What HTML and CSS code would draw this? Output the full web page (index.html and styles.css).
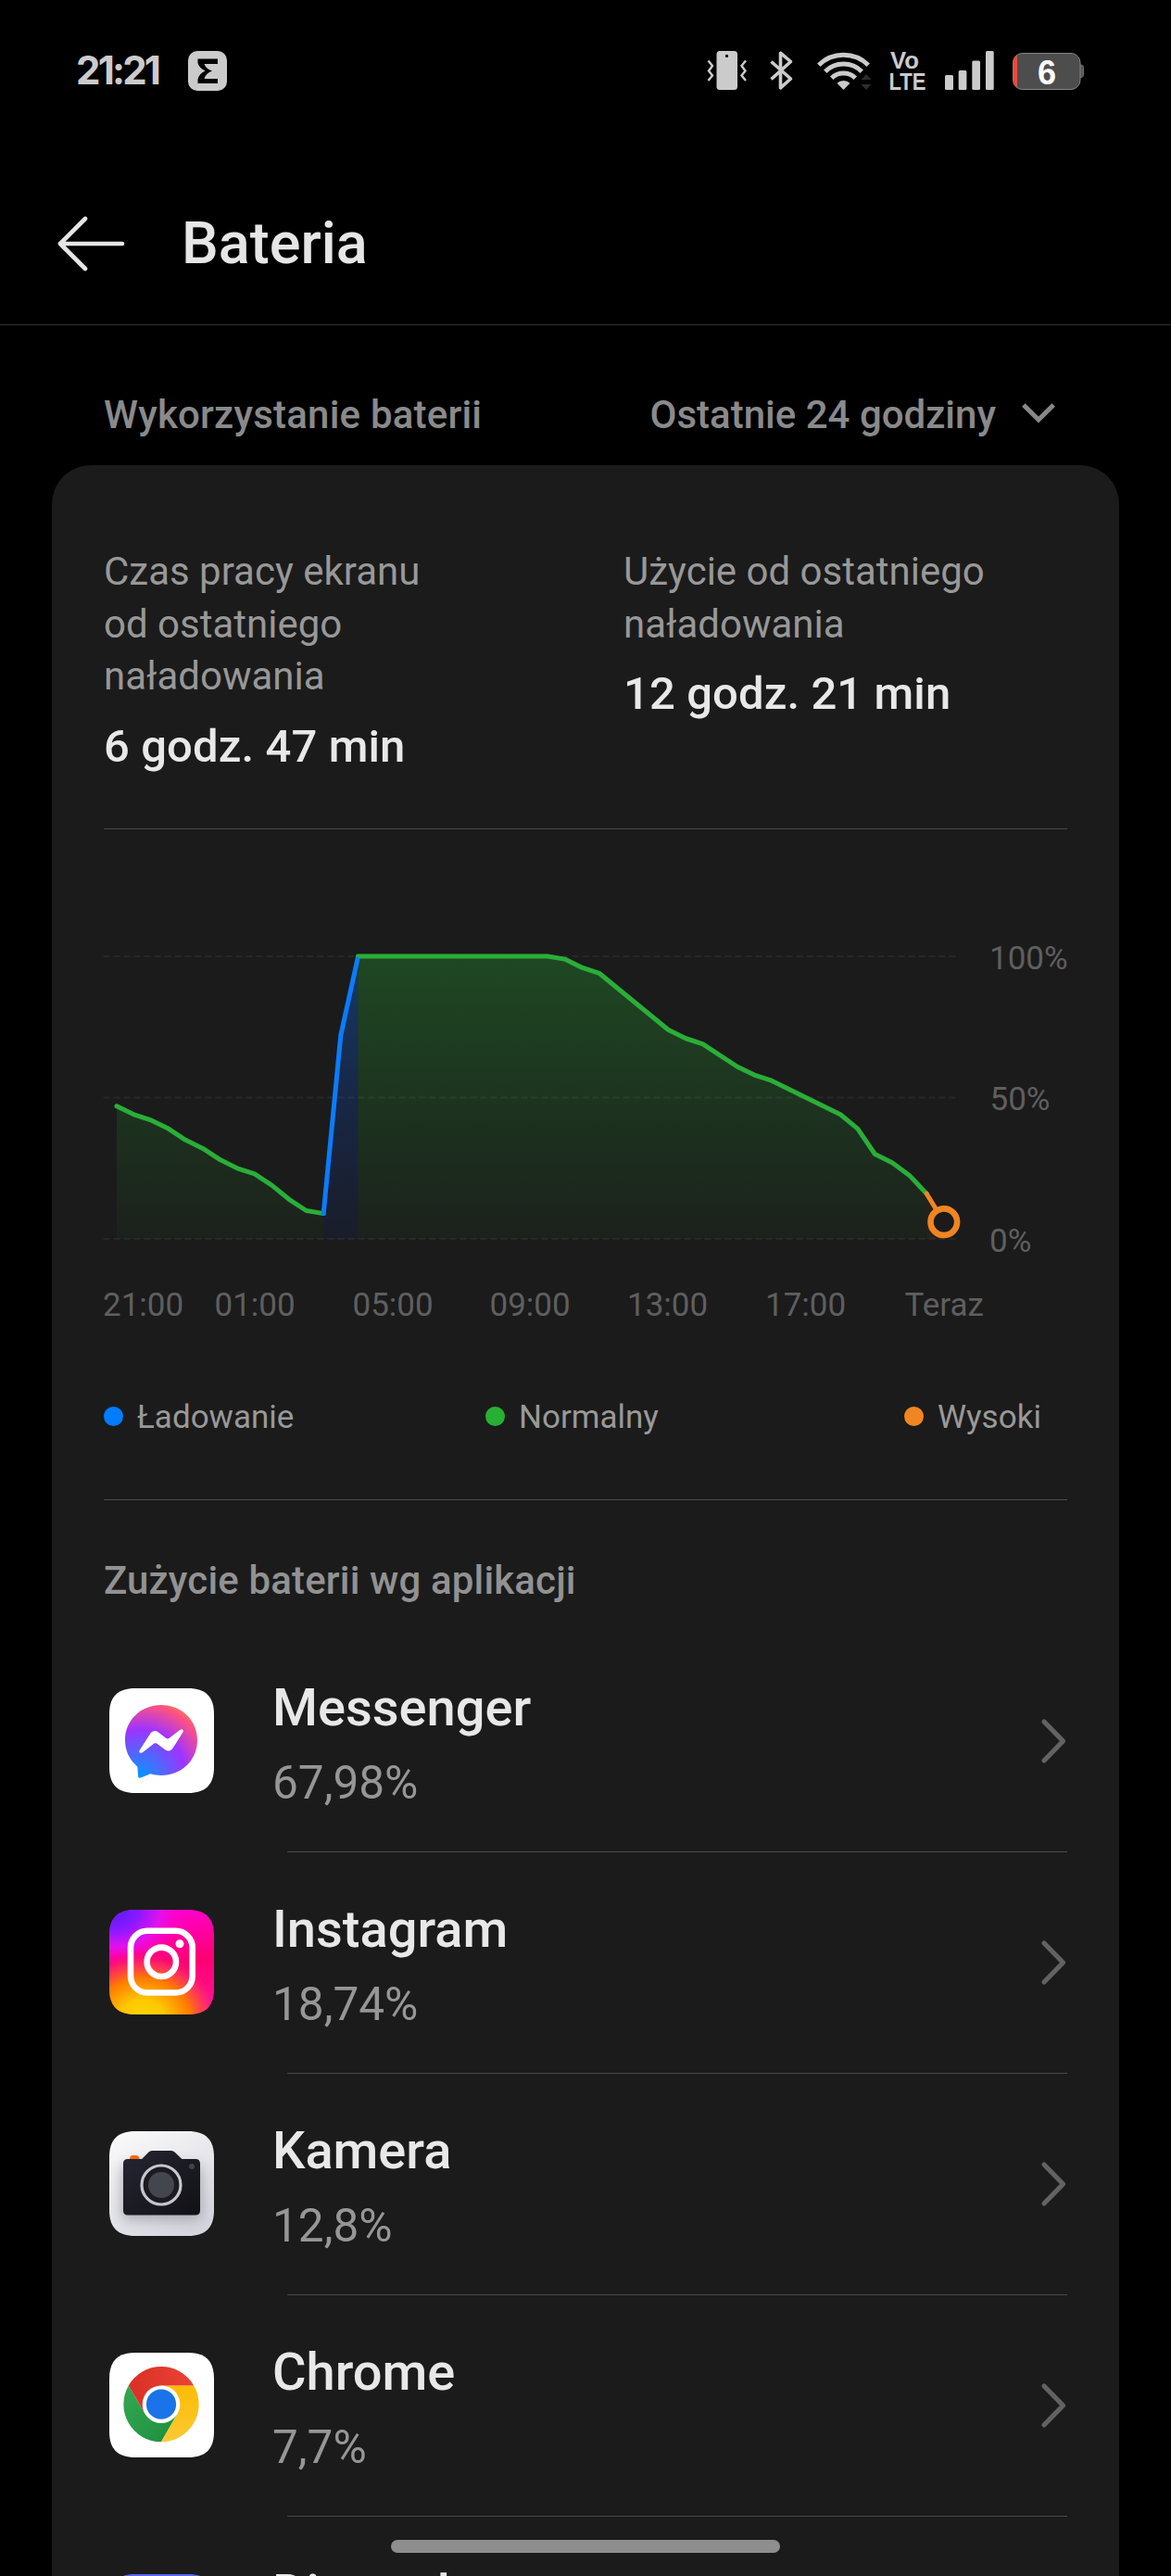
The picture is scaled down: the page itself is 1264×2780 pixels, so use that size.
FILE: index.html
```html
<!DOCTYPE html>
<html lang="pl">
<head>
<meta charset="utf-8">
<title>Bateria</title>
<link rel="stylesheet" href="styles.css">
</head>
<body>
<div class="screen">
  <header class="status">
    <span class="clock">21:21</span>
    <svg class="status-app" width="42" height="43" viewBox="0 0 42 43"><rect width="42" height="43" rx="10" fill="#cbcbcb"/><path d="M10.500 8.500H32V14H17.500C18.500 17.500 21.500 20 26 21.500C21.500 23.500 18.500 26 17.500 30H32V35H10.500V30.500C11.500 26.500 14 23.500 18.500 21.500C14 19.500 11.500 16.500 10.500 13Z" fill="#000"/></svg>
    <div class="status-icons">
      <svg class="i-vibrate" width="44" height="42" viewBox="0 0 44 42" fill="none" stroke="#cbcbcb" stroke-width="2.400"><rect x="10.500" width="22.500" height="42" rx="3.500" fill="#cbcbcb" stroke="none"/><circle cx="21.500" cy="5.400" r="1.600" fill="#000" stroke="none"/><path d="M1.500 10.500L6 16 2 21.500 6 26.500 1.500 32M42 10.500L37.500 16 41.500 21.500 37.500 26.500 42 32"/></svg>
      <svg class="i-bt" width="25" height="42" viewBox="0 0 25 42" fill="none" stroke="#cbcbcb" stroke-width="3.600" stroke-linejoin="round"><path d="M1.500 11.500L22.500 30 11.500 39.800V2.200L22.500 11.500 1.500 30.500"/></svg>
      <svg class="i-wifi" width="60" height="42" viewBox="0 0 60 42" fill="none" stroke="#cbcbcb" stroke-width="5"><path d="M1.800 15.200A38 38 0 0 1 55.200 15.200M8.800 22.200A28 28 0 0 1 48.200 22.200M15.700 29.200A18.500 18.500 0 0 1 41.300 29.200"/><path d="M28.500 42L21.500 34.800A10 10 0 0 1 35.500 34.800Z" fill="#cbcbcb" stroke="none"/><path d="M53 25L58.500 31H47.500ZM53 42L58.500 36H47.500Z" fill="#2c2c2c" stroke="none"/></svg>
      <svg class="i-volte" width="38" height="43" viewBox="0 0 38 43" fill="#cbcbcb"><text class="volte" x="0" y="19" textLength="31" lengthAdjust="spacingAndGlyphs">Vo</text><text class="volte" x="-1.500" y="42" textLength="40" lengthAdjust="spacingAndGlyphs">LTE</text></svg>
      <svg class="i-signal" width="53" height="42" viewBox="0 0 53 42" fill="#cbcbcb"><rect y="26" width="9" height="16" rx="1.500"/><rect x="14.700" y="21" width="8.700" height="21" rx="1.500"/><rect x="29.300" y="10.500" width="8.700" height="31.500" rx="1.500"/><rect x="44" width="8.700" height="42" rx="1.500"/></svg>
      <svg class="i-battery" width="78" height="42" viewBox="0 0 78 42"><defs><clipPath id="cell"><rect x=".5" y="2.500" width="72.500" height="39" rx="10"/></clipPath></defs><path d="M72 15C77 15 76.500 16.500 76.500 22 76.500 27.500 77 28.500 72 28.500Z" fill="#555" stroke="#777"/><rect x=".5" y="2.500" width="72.500" height="39" rx="10" fill="#4d4d4d" stroke="#868686"/><rect y="2" width="5" height="40" fill="#ec4a3c" clip-path="url(#cell)"/><text class="level" x="37" y="35.500" text-anchor="middle">6</text></svg>
    </div>
  </header>

  <div class="topbar">
    <svg width="73" height="60" viewBox="0 0 73 60" fill="none" stroke="#e6e6e6" stroke-width="4.600" stroke-linecap="round" stroke-linejoin="round"><path d="M30 3L3 30 30 57M3 30H70"/></svg>
    <h1>Bateria</h1>
  </div>

  <div class="filter">
    <span class="caption">Wykorzystanie baterii</span>
    <div class="range"><span>Ostatnie 24 godziny</span>
      <svg width="36" height="22" viewBox="0 0 36 22" fill="none" stroke="#888" stroke-width="5"><path d="M1.800 2L18 18 34.200 2"/></svg>
    </div>
  </div>

  <main class="card">
    <section class="stats">
      <div><p>Czas pracy ekranu<br>od ostatniego<br>naładowania</p><strong>6 godz. 47 min</strong></div>
      <div><p>Użycie od ostatniego<br>naładowania</p><strong>12 godz. 21 min</strong></div>
    </section>

    <section class="usage">
      <svg class="chart" width="1042" height="545" viewBox="0 0 1042 545">
        <defs>
          <linearGradient id="green" gradientUnits="userSpaceOnUse" x1="0" y1="137" x2="0" y2="442"><stop stop-color="#27b034" stop-opacity=".3"/><stop offset="1" stop-color="#27b034" stop-opacity=".04"/></linearGradient>
          <linearGradient id="blue" gradientUnits="userSpaceOnUse" x1="0" y1="137" x2="0" y2="442"><stop stop-color="#0a7cff" stop-opacity=".32"/><stop offset="1" stop-color="#0a40ff" stop-opacity=".06"/></linearGradient>
        </defs>
        <path d="M14 442V298.700L32.600 307.800 51.200 313.900 69.800 323.100 88.400 335.300 107 344.400 125.600 356.600 144.200 365.800 162.800 371.900 181.400 384.100 200 399.300 218.600 411.500 237.200 414.600V442Z" fill="url(#green)"/>
        <path d="M237.200 442V414.600L255.800 222.400 274.400 137V442Z" fill="url(#blue)"/>
        <path d="M274.400 442V137H479L497.600 140.100 516.200 149.200 534.800 155.300 609.200 216.300 627.800 225.500 646.400 231.600 683.600 256 702.200 265.100 720.800 271.200 795.200 307.800 813.800 323.100 832.400 350.500 851 359.700 869.600 373.400 888.200 393.200V442Z" fill="url(#green)"/>
        <path d="M888.200 442V393.200L906.800 423.700V442Z" fill="#f08522" fill-opacity=".06"/>
        <path d="M-.5 137H921M-.5 289.500H921M-.5 442H921" stroke="#fff" stroke-opacity=".055" stroke-width="2" stroke-dasharray="7 4"/>
        <g fill="none" stroke-width="5" stroke-linejoin="round">
          <path d="M14 298.700L32.600 307.800 51.200 313.900 69.800 323.100 88.400 335.300 107 344.400 125.600 356.600 144.200 365.800 162.800 371.900 181.400 384.100 200 399.300 218.600 411.500 237.200 414.600" stroke="#2aae38" stroke-linecap="round"/>
          <path d="M274.400 137H479L497.600 140.100 516.200 149.200 534.800 155.300 609.200 216.300 627.800 225.500 646.400 231.600 683.600 256 702.200 265.100 720.800 271.200 795.200 307.800 813.800 323.100 832.400 350.500 851 359.700 869.600 373.400 888.200 393.200" stroke="#2aae38" stroke-linecap="round"/>
          <path d="M237.200 416.500V414.600L255.800 222.400 274.400 138" stroke="#0a7cff"/>
          <path d="M888.200 393.200L906.800 423.700" stroke="#f08522" stroke-linecap="round"/>
        </g>
        <circle cx="906.800" cy="423.700" r="14.300" fill="#1b1b1b" stroke="#f08522" stroke-width="6.600"/>
        <g class="axis">
          <text x="956" y="151">100%</text><text x="956.500" y="303">50%</text><text x="956" y="456">0%</text>
          <text x="-1" y="525">21:00</text><text x="119.500" y="525">01:00</text><text x="268.500" y="525">05:00</text><text x="416.500" y="525">09:00</text><text x="565" y="525">13:00</text><text x="714" y="525">17:00</text><text x="864.500" y="525">Teraz</text>
        </g>
      </svg>
      <div class="legend">
        <span><i class="dot charging"></i>Ładowanie</span>
        <span><i class="dot normal"></i>Normalny</span>
        <span><i class="dot high"></i>Wysoki</span>
      </div>
    </section>

    <h2>Zużycie baterii wg aplikacji</h2>
    <ul class="apps">
      <li>
        <svg class="app-icon" width="113" height="113" viewBox="0 0 113 113"><defs>
          <path id="tile" d="M28 0H85C104 0 113 9 113 28V85C113 104 104 113 85 113H28C9 113 0 104 0 85V28C0 9 9 0 28 0Z"/><clipPath id="clip"><use href="#tile"/></clipPath>
          <radialGradient id="msg" cx=".19" cy=".995" r="1.090"><stop stop-color="#0099ff"/><stop offset=".61" stop-color="#a033ff"/><stop offset=".935" stop-color="#ff5280"/><stop offset="1" stop-color="#ff7061"/></radialGradient></defs>
          <use href="#tile" fill="#fff"/>
          <path d="M56 18C78 18 95 34.500 95 56S78 94 56 94C52 94 48 93.300 44.500 92.300L34 96.500C32 97 31 96.300 31 94.500L30.500 86C30.500 85 30 84.200 29 83.300C21.500 76.500 17 67 17 56C17 34.500 34 18 56 18Z" fill="url(#msg)"/>
          <path d="M32.600 67L44.500 48.500C46.300 45.700 49.800 45.200 52.300 47L61.500 54C62.500 54.600 63.500 54.600 64.300 54L76.500 44.800C78.500 43.400 80.500 45 79.500 47.200L68.500 64.800C66.600 67.800 63 68.400 60.500 66.600L51.200 59.600C50.300 59 49.200 59 48.400 59.600L35.800 69.200C33.500 70.800 31.300 69 32.600 67Z" fill="#fff"/>
        </svg>
        <div class="app"><b>Messenger</b><span>67,98%</span></div>
        <svg class="go" width="27" height="50" viewBox="0 0 27 50"><path d="M3 4L23.500 25 3 46"/></svg>
      </li>
      <li>
        <svg class="app-icon" width="113" height="113" viewBox="0 0 113 113"><defs>
          <linearGradient id="ig" x1=".6" y1="0" x2=".75" y2="1"><stop stop-color="#ff00d0"/><stop offset=".5" stop-color="#ff0072"/><stop offset=".75" stop-color="#ff0a88"/><stop offset="1" stop-color="#ff18b8"/></linearGradient>
          <radialGradient id="igp" gradientUnits="userSpaceOnUse" cx="0" cy="0" r="68" gradientTransform="translate(4 2) scale(1.150 .85)"><stop stop-color="#5a1cff"/><stop offset=".35" stop-color="#8a18ff"/><stop offset=".65" stop-color="#e012ee"/><stop offset="1" stop-color="#ff00c8" stop-opacity="0"/></radialGradient>
          <radialGradient id="igy" gradientUnits="userSpaceOnUse" cx="0" cy="0" r="78" gradientTransform="translate(36 118) scale(1.100 .95)"><stop stop-color="#ffd800"/><stop offset=".28" stop-color="#ffc800"/><stop offset=".6" stop-color="#ff7a00"/><stop offset=".82" stop-color="#ff3060" stop-opacity=".8"/><stop offset="1" stop-color="#ff0070" stop-opacity="0"/></radialGradient></defs>
          <g clip-path="url(#clip)"><path d="M0 0H113V113H0Z" fill="url(#ig)"/><path d="M0 0H113V113H0Z" fill="url(#igp)"/><path d="M0 0H113V113H0Z" fill="url(#igy)"/></g>
          <g fill="none" stroke="#fff" stroke-width="6.600"><rect x="23" y="22.800" width="66.700" height="66.700" rx="18"/><circle cx="56.300" cy="56.300" r="15.700"/></g><circle cx="76" cy="36.700" r="4.500" fill="#fff"/>
        </svg>
        <div class="app"><b>Instagram</b><span>18,74%</span></div>
        <svg class="go" width="27" height="50" viewBox="0 0 27 50"><path d="M3 4L23.500 25 3 46"/></svg>
      </li>
      <li>
        <svg class="app-icon" width="113" height="113" viewBox="0 0 113 113"><defs>
          <linearGradient id="cam" x1=".1" y1="0" x2=".7" y2="1"><stop stop-color="#fafafa"/><stop offset="1" stop-color="#d6d6df"/></linearGradient>
          <linearGradient id="body" x1="0" y1="0" x2="1" y2="1"><stop stop-color="#262533"/><stop offset="1" stop-color="#111114"/></linearGradient>
          <filter id="soft" x="-30%" y="-30%" width="160%" height="160%"><feGaussianBlur stdDeviation="7"/></filter></defs>
          <use href="#tile" fill="url(#cam)"/>
          <g clip-path="url(#clip)"><rect x="13" y="36" width="87" height="60" rx="8" fill="#777784" opacity=".5" filter="url(#soft)"/></g>
          <path d="M22 32V29.500C22 27 23.500 26 26 26H28.500C31 26 32.500 27.500 32.500 30V32Z" fill="#f8670c"/>
          <path d="M20 30H35L42.500 22.500Q44 21 46 21H67Q69 21 70.500 22.500L78.300 30H93Q98 30 98 35V85.500Q98 90.500 93 90.500H20Q15 90.500 15 85.500V35Q15 30 20 30Z" fill="url(#body)"/>
          <circle cx="56" cy="58" r="21" fill="#1a1a20" stroke="#c7c6d0" stroke-width="3.200"/><circle cx="56" cy="58" r="14" fill="#44464d"/><circle cx="89" cy="38" r="3" fill="#42424c"/>
        </svg>
        <div class="app"><b>Kamera</b><span>12,8%</span></div>
        <svg class="go" width="27" height="50" viewBox="0 0 27 50"><path d="M3 4L23.500 25 3 46"/></svg>
      </li>
      <li>
        <svg class="app-icon" width="113" height="113" viewBox="0 0 113 113"><defs>
          <linearGradient id="cr" x1="0" x2="1"><stop stop-color="#d93025"/><stop offset="1" stop-color="#ea4335"/></linearGradient>
          <linearGradient id="cy" x1="0" y1="1" x2="0" y2="0"><stop stop-color="#fcc934"/><stop offset="1" stop-color="#fbbc04"/></linearGradient>
          <linearGradient id="cg" x1="1" y1="1" x2="0" y2="0"><stop stop-color="#1e8e3e"/><stop offset="1" stop-color="#34a853"/></linearGradient></defs>
          <use href="#tile" fill="#fff"/>
          <path d="M20.800 35.400A40.600 40.600 0 0 0 56 96.300L73.600 65.800 38.400 65.800Z" fill="url(#cg)"/>
          <path d="M91.200 35.400A40.600 40.600 0 0 1 56 96.300L73.600 65.800 56 35.400Z" fill="url(#cy)"/>
          <path d="M20.800 35.400A40.600 40.600 0 0 1 91.200 35.400H56L38.400 65.800Z" fill="url(#cr)"/>
          <circle cx="56" cy="55.700" r="20.300" fill="#fff"/><circle cx="56" cy="55.700" r="16.100" fill="#1a73e8"/>
        </svg>
        <div class="app"><b>Chrome</b><span>7,7%</span></div>
        <svg class="go" width="27" height="50" viewBox="0 0 27 50"><path d="M3 4L23.500 25 3 46"/></svg>
      </li>
      <li>
        <svg class="app-icon" width="113" height="113" viewBox="0 0 113 113"><use href="#tile" fill="#5865f2"/></svg>
        <div class="app"><b>Discord</b></div>
      </li>
    </ul>
  </main>
  <div class="home-bar"></div>
</div>
</body>
</html>
```
FILE: styles.css
```css
* { box-sizing: border-box; margin: 0; padding: 0; }
html, body { background: #000; }
body { font-family: Roboto, "Noto Sans", sans-serif; color: #e8e8e8; }
svg { display: block; flex: none; overflow: visible; }

.screen { position: relative; width: 1264px; height: 2780px; overflow: hidden; background: #000; }

.status { display: flex; align-items: center; height: 152px; padding: 0 93px 0 82px; }
.clock { width: 121px; font: 700 42px/48px Inter, Roboto, sans-serif; letter-spacing: -2.8px; color: #cbcbcb; }
.status-icons { display: flex; margin-left: auto; }
.i-bt { margin-left: 24px; }
.i-wifi { margin-left: 26px; }
.i-volte { margin-left: 19px; }
.i-signal { margin-left: 21px; }
.i-battery { margin-left: 20px; }
.volte { font: 700 26px "Liberation Sans", sans-serif; }
.level { font: 700 36px "Liberation Sans", sans-serif; fill: #fff; }

.topbar { display: flex; align-items: center; gap: 61px; height: 199px; padding: 24px 0 0 62px; border-bottom: 1px solid #323232; }
.topbar h1 { font-size: 63px; font-weight: 500; line-height: 80px; color: #e6e6e6; }

.filter { display: flex; align-items: center; justify-content: space-between; height: 151px; padding: 42px 125px 0 112px; font-size: 42px; font-weight: 500; color: #8a8a8a; }
.caption { letter-spacing: .2px; }
.range { display: flex; align-items: center; gap: 28px; }
.range svg { margin-top: -4px; }

.card { height: 2278px; margin: 0 56px; padding: 87px 56px 0; border-radius: 42px 42px 0 0; background: #1b1b1b; overflow: hidden; }

.stats { display: grid; grid-template-columns: 561px 1fr; height: 306px; border-bottom: 1px solid #4a4a4a; }
.stats p { font-size: 42px; line-height: 56.5px; color: #989898; }
.stats strong { display: block; margin-top: 15px; font-size: 49px; font-weight: 500; line-height: 64px; letter-spacing: .1px; }

.usage { height: 724px; border-bottom: 1px solid #4a4a4a; }
.axis { font-size: 35px; fill: #5f5f5f; }
.legend { display: grid; grid-template-columns: 412px 452px auto; align-items: center; height: 178px; font-size: 35px; color: #999; }
.legend span { display: flex; align-items: center; }
.dot { width: 21px; height: 21px; margin: -2px 15px 0 0; border-radius: 50%; }
.charging { background: #007cff; }
.normal { background: #27b034; }
.high { background: #f08522; }

.card h2 { height: 141px; padding-top: 33px; font-size: 42px; font-weight: 500; line-height: 108px; letter-spacing: .15px; color: #929292; }

.apps { list-style: none; }
.apps li { position: relative; display: grid; grid-template-columns: 182px 1fr auto; height: 239px; }
.apps li::after { content: ""; grid-column: 1 / -1; align-self: end; height: 1px; margin-left: 198px; background: #4a4a4a; }
.app-icon { margin: 62px 0 0 6px; }
.app { display: flex; flex-direction: column; gap: 11px; padding-top: 47px; height: 238px; }
.app b { font-size: 56px; font-weight: 500; line-height: 72px; }
.app span { font-size: 49.5px; line-height: 68px; color: #969696; }
.go { align-self: center; margin-right: 1px; fill: none; stroke: #626262; stroke-width: 5.200; stroke-linecap: round; stroke-linejoin: round; }

.home-bar { position: absolute; left: 422px; top: 2741px; width: 420px; height: 14px; border-radius: 7px; background: #8e8e8e; }
```
